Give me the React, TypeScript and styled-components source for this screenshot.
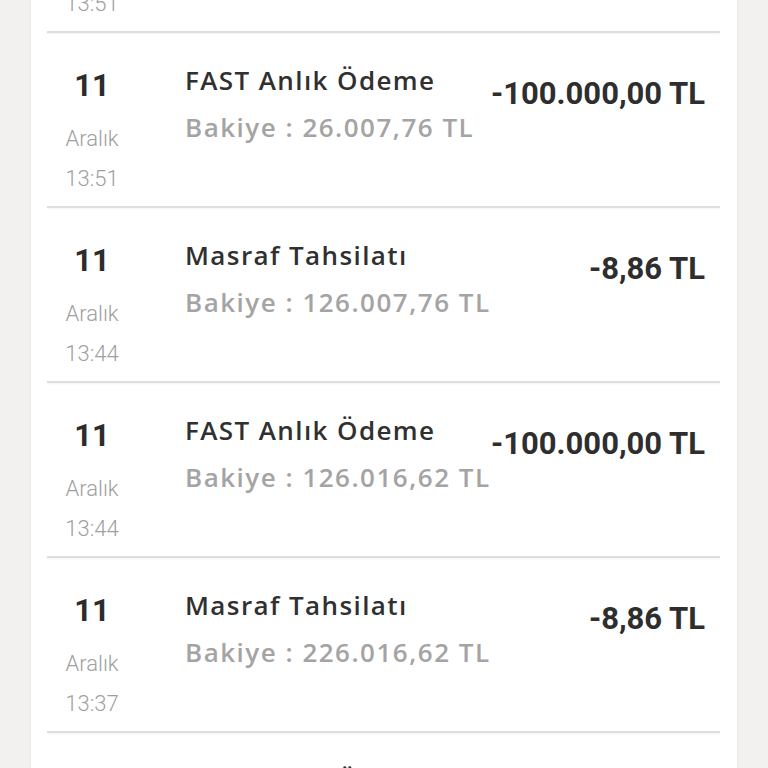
import styled, { createGlobalStyle } from "styled-components";

const GlobalStyle = createGlobalStyle`
  html, body {
    margin: 0;
    padding: 0;
    background: #f2f1ef;
  }
  * {
    box-sizing: border-box;
  }
`;

type Movement = {
  day: string;
  month: string;
  time: string;
  title: string;
  balance: string;
  amount: string;
};

const movements: Movement[] = [
  { day: "11", month: "Aralık", time: "13:51", title: "Masraf Tahsilatı", balance: "26.016,62 TL", amount: "-8,86 TL" },
  { day: "11", month: "Aralık", time: "13:51", title: "FAST Anlık Ödeme", balance: "26.007,76 TL", amount: "-100.000,00 TL" },
  { day: "11", month: "Aralık", time: "13:44", title: "Masraf Tahsilatı", balance: "126.007,76 TL", amount: "-8,86 TL" },
  { day: "11", month: "Aralık", time: "13:44", title: "FAST Anlık Ödeme", balance: "126.016,62 TL", amount: "-100.000,00 TL" },
  { day: "11", month: "Aralık", time: "13:37", title: "Masraf Tahsilatı", balance: "226.016,62 TL", amount: "-8,86 TL" },
  { day: "11", month: "Aralık", time: "13:37", title: "FAST Anlık Ödeme", balance: "226.025,48 TL", amount: "-100.000,00 TL" },
];

const Viewport = styled.div`
  height: 100vh;
  overflow: hidden;
  padding: 0 31px;
`;

const Card = styled.div`
  background: #ffffff;
  min-height: 100%;
  box-shadow: 0 0 4px rgba(0, 0, 0, 0.06);
`;

// the list is scrolled, the first row is only partly visible
const List = styled.div`
  margin-top: -142px;
  padding: 0 17px 0 16px;
`;

const Row = styled.div`
  display: grid;
  grid-template-columns: 90px minmax(0, 1fr) auto;
  column-gap: 48px;
  padding: 0 15px 0 0;
  height: 173px;
`;

const Divider = styled.div`
  height: 2px;
  background: #dedede;
  box-shadow: 0 1px 2px rgba(0, 0, 0, 0.05);
`;

const DateCol = styled.div`
  display: flex;
  flex-direction: column;
  align-items: center;
  padding-top: 35px;
  font-family: Roboto, "Liberation Sans", sans-serif;
`;

const Day = styled.div`
  font-size: 31px;
  font-weight: 700;
  line-height: 36px;
  color: #2c2c2c;
  margin-bottom: 15px;
`;

const Light = styled.div`
  font-size: 22px;
  font-weight: 300;
  line-height: 40px;
  color: #a0a0a0;
`;

const Info = styled.div`
  display: flex;
  flex-direction: column;
  gap: 11px;
  padding-top: 29px;
  font-family: "Open Sans", "Noto Sans", sans-serif;
  font-size: 26px;
  font-weight: 600;
  line-height: 36px;
  white-space: nowrap;
`;

const Title = styled.div`
  color: #303030;
  letter-spacing: 1.4px;
`;

const Balance = styled.div`
  color: #a4a4a4;
  letter-spacing: 1.5px;
`;

const Amount = styled.div`
  padding-top: 43px;
  font-family: Roboto, "Liberation Sans", sans-serif;
  font-size: 31px;
  font-weight: 700;
  line-height: 36px;
  color: #2e2e2e;
  text-align: right;
  white-space: nowrap;
`;

export default function App() {
  return (
    <>
      <GlobalStyle />
      <Viewport>
        <Card>
          <List>
            {movements.map((m, i) => (
              <div key={i}>
                <Row>
                  <DateCol>
                    <Day>{m.day}</Day>
                    <Light>{m.month}</Light>
                    <Light>{m.time}</Light>
                  </DateCol>
                  <Info>
                    <Title>{m.title}</Title>
                    <Balance>Bakiye : {m.balance}</Balance>
                  </Info>
                  <Amount>{m.amount}</Amount>
                </Row>
                <Divider />
              </div>
            ))}
          </List>
        </Card>
      </Viewport>
    </>
  );
}
